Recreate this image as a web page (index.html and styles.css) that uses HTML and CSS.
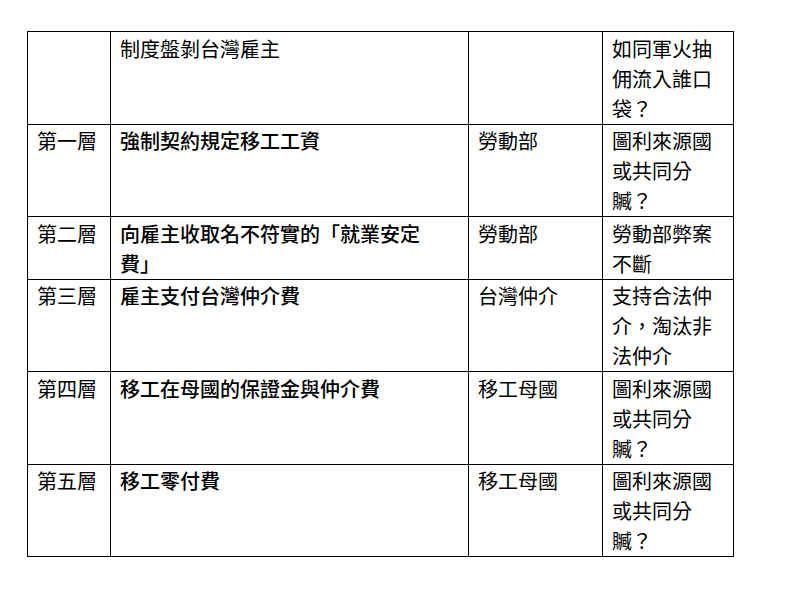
FILE: index.html
```html
<!DOCTYPE html>
<html lang="zh-Hant">
<head>
<meta charset="utf-8">
<link rel="stylesheet" href="styles.css">
</head>
<body>
<div class="table">
  <div class="cell"></div>
  <div class="cell wide">制度盤剝台灣雇主</div>
  <div class="cell c3"></div>
  <div class="cell">如同軍火抽佣流入誰口袋？</div>

  <div class="cell">第一層</div>
  <div class="cell wide b">強制契約規定移工工資</div>
  <div class="cell c3">勞動部</div>
  <div class="cell">圖利來源國或共同分贓？</div>

  <div class="cell">第二層</div>
  <div class="cell wide b">向雇主收取名不符實的「就業安定費」</div>
  <div class="cell c3">勞動部</div>
  <div class="cell">勞動部弊案不斷</div>

  <div class="cell">第三層</div>
  <div class="cell wide b">雇主支付台灣仲介費</div>
  <div class="cell c3">台灣仲介</div>
  <div class="cell">支持合法仲介，淘汰非法仲介</div>

  <div class="cell">第四層</div>
  <div class="cell wide b">移工在母國的保證金與仲介費</div>
  <div class="cell c3">移工母國</div>
  <div class="cell">圖利來源國或共同分贓？</div>

  <div class="cell">第五層</div>
  <div class="cell wide b">移工零付費</div>
  <div class="cell c3">移工母國</div>
  <div class="cell">圖利來源國或共同分贓？</div>
</div>
</body>
</html>
```
FILE: styles.css
```css
html, body {
  margin: 0;
  padding: 0;
  background: #fff;
}
body {
  padding: 31px 0 0 27px;
  font-family: "Noto Sans CJK TC", "Noto Sans CJK SC", sans-serif;
  font-size: 20px;
  color: #000;
}
.table {
  display: grid;
  grid-template-columns: 83px 358px 134px 131px;
  width: max-content;
  border-left: 1px solid #000;
  border-top: 1px solid #000;
}
.cell {
  border-right: 1px solid #000;
  border-bottom: 1px solid #000;
  padding: 1.5px 10px 0 9px;
  line-height: 30px;
  min-height: 60px;
  word-break: break-all;
}
.wide {
  padding-right: 30px;
}
.b {
  font-weight: 500;
}
```
